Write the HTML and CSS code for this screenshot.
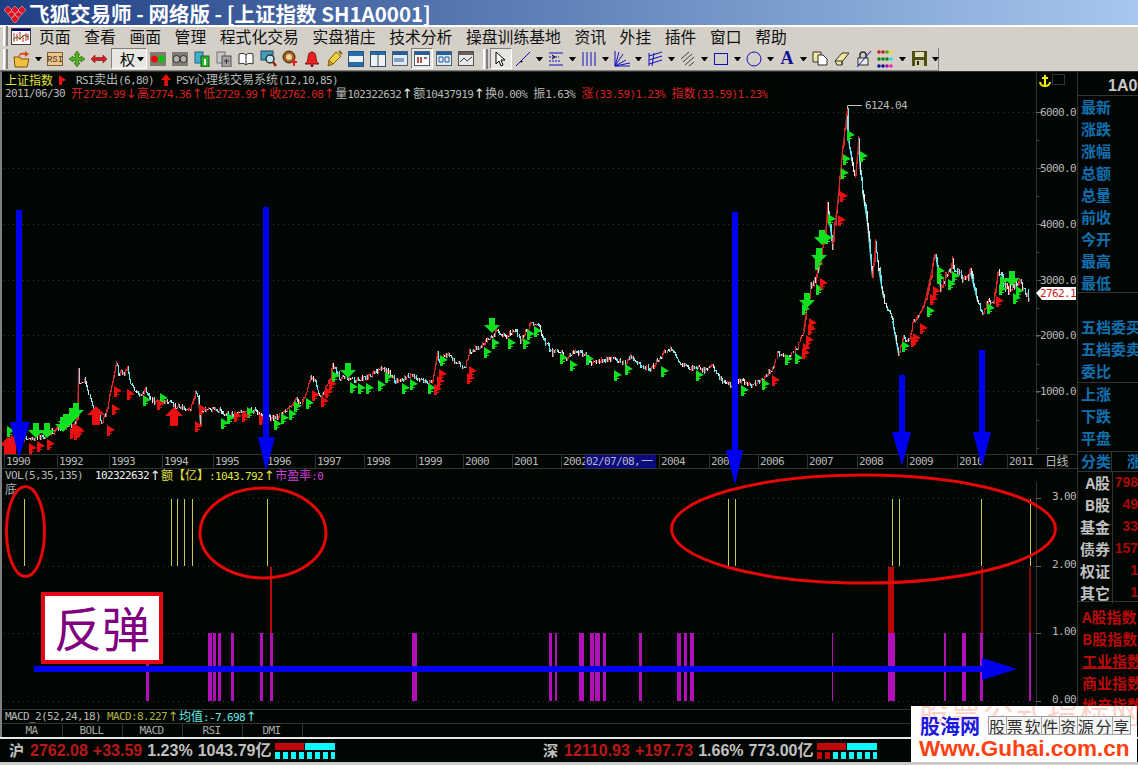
FILE: index.html
```html
<!DOCTYPE html>
<html>
	<head>
		<meta charset="utf-8">
		<title>飞狐交易师</title>
		<link rel="stylesheet" href="styles.css">
	</head>

	<body>
		<div class="app">
			<div class="titlebar">
				<svg class="logo" width="24" height="20" viewBox="0 0 24 20">
					<path d="M5 3l4 4-4 4-4-4z M12 3l4 4-4 4-4-4z M19 3l4 4-4 4-4-4z M8.500 8l3.500 3.500-3.500 3.500-3.500-3.500z M15.500 8l3.500 3.500-3.500 3.500-3.500-3.500z M12 12l4 4-4 4-4-4z" fill="#e01020" stroke="#ffd0c0" stroke-width=".5"/>
				</svg>
				<span>飞狐交易师 - 网络版 - [上证指数 SH1A0001]</span>
			</div>

			<div class="menubar">
				<i class="grip"></i>
				<svg class="menu-icon" width="20" height="17" viewBox="0 0 20 17">
					<rect x=".5" y=".5" width="19" height="16" fill="#fff" stroke="#404040"/>
					<rect x="1" y="1" width="18" height="2" fill="#000080"/>
					<path d="M3 5v9M6 6v7M9 4v8M12 7v7M15 5v8M17 6v6" stroke="#d02020"/>
					<path d="M2 11l4-2 3 2 4-4 5 2" stroke="#108010" fill="none"/>
				</svg>
				<span>页面</span><span>查看</span><span>画面</span><span>管理</span><span>程式化交易</span><span>实盘猎庄</span><span>技术分析</span><span>操盘训练基地</span><span>资讯</span><span>外挂</span><span>插件</span><span>窗口</span><span>帮助</span>
			</div>

			<div class="toolbar">
				<i class="grip"></i>
				<b class="tool"><svg width="18" height="18" viewBox="0 0 18 18"><path d="M1 7h6l1 2h8l-2 8H2z" fill="#f0c040" stroke="#805000"/><path d="M5 7c1-4 4-5 7-4V1l4 3-4 3V5c-3-1-5 0-7 2z" fill="#e04010"/></svg></b><i class="dd"></i>
				<b class="tool"><svg width="16" height="14" viewBox="0 0 16 14"><rect x=".5" y=".5" width="15" height="13" fill="#e8c890" stroke="#806030"/><text x="8" y="10" class="ico-text">RSI</text></svg></b>
				<b class="tool"><svg width="16" height="16" viewBox="0 0 16 16"><path d="M8 0l3 4H9.500v2.500H12V5l4 3-4 3V9.500H9.500V12H11l-3 4-3-4h1.500V9.500H4V11L0 8l4-3v1.500h2.500V4H5z" fill="#50b020" stroke="#206000" stroke-width=".6"/></svg></b>
				<b class="tool"><svg width="16" height="10" viewBox="0 0 16 10"><path d="M0 5l4-4v2.500h8V1l4 4-4 4V6.500H4V9z" fill="#d02020" stroke="#801010" stroke-width=".6"/></svg></b>
				<b class="tool-wide">权<i class="dd"></i></b>
				<b class="tool"><svg width="16" height="14" viewBox="0 0 16 14"><rect width="16" height="14" fill="#807c74"/><circle cx="4.500" cy="7" r="3.500" fill="#e01010"/><circle cx="11.500" cy="7" r="3.500" fill="#10c010"/></svg></b>
				<b class="tool"><svg width="16" height="14" viewBox="0 0 16 14"><rect width="16" height="14" fill="#807c74"/><circle cx="4.500" cy="7" r="3.500" fill="#b0b0b0" stroke="#303030"/><circle cx="11.500" cy="7" r="3.500" fill="#b0b0b0" stroke="#303030"/></svg></b>
				<b class="tool"><svg width="16" height="16" viewBox="0 0 16 16"><rect x="1" y="1" width="8" height="11" fill="#40b0d0" stroke="#206080"/><rect x="7" y="5" width="8" height="11" fill="#30b030" stroke="#106010"/><path d="M11 8v6" stroke="#fff" stroke-width="2"/></svg></b>
				<b class="tool"><svg width="16" height="16" viewBox="0 0 16 16"><rect x="1" y="1" width="8" height="11" fill="#c8c8c8" stroke="#707070"/><rect x="6" y="5" width="9" height="11" fill="#a0a0a0" stroke="#505050"/><path d="M8 10h5M10.500 8v5" stroke="#303030"/></svg></b>
				<b class="tool"><svg width="16" height="16" viewBox="0 0 16 16"><path d="M1 3c3-1 5-1 7 1 2-2 4-2 7-1v10c-3-1-5-1-7 1-2-2-4-2-7-1z M8 4v10" fill="#fff" stroke="#303030"/></svg></b>
				<b class="tool"><svg width="17" height="17" viewBox="0 0 17 17"><rect x="1" y="1" width="12" height="9" fill="#40a0c0" stroke="#204060"/><circle cx="10" cy="9" r="4" fill="#c0e8f0" stroke="#303030" stroke-width="1.500"/><path d="M13 12l3 4" stroke="#a02010" stroke-width="2.500"/></svg></b>
				<b class="tool"><svg width="17" height="17" viewBox="0 0 17 17"><circle cx="7" cy="7" r="6" fill="#a06020" stroke="#402000"/><circle cx="7" cy="7" r="3" fill="#f0d0a0"/><path d="M12 9v7M9 12h6" stroke="#e02020" stroke-width="2"/></svg></b>
				<b class="tool"><svg width="16" height="16" viewBox="0 0 16 16"><path d="M8 1c3 0 4 3 4 6s1 4 3 6H1c2-2 3-3 3-6s1-6 4-6z" fill="#e82020" stroke="#801010"/><circle cx="8" cy="14.500" r="1.500" fill="#801010"/></svg></b>
				<b class="tool"><svg width="17" height="17" viewBox="0 0 17 17"><path d="M3 10l7-8 5 4-8 8z" fill="#f0d040" stroke="#806000"/><path d="M3 10l4 4-5 2z" fill="#d0a020" stroke="#806000"/><path d="M13 1l3 3" stroke="#806000" stroke-width="2"/></svg></b>
				<b class="tool"><svg width="16" height="16" viewBox="0 0 16 16"><rect x=".5" y=".5" width="15" height="15" fill="#f0f0f0" stroke="#305070"/><rect x="1" y="1" width="14" height="4" fill="#2070b0"/><rect x="1" y="11" width="14" height="4" fill="#2070b0"/></svg></b>
				<b class="tool"><svg width="16" height="16" viewBox="0 0 16 16"><rect x=".5" y=".5" width="15" height="15" fill="#f0f0f0" stroke="#305070"/><rect x="1" y="1" width="14" height="3" fill="#2070b0"/><path d="M8 1v14" stroke="#305070"/></svg></b>
				<b class="tool"><svg width="16" height="15" viewBox="0 0 16 15"><rect x=".5" y=".5" width="15" height="14" fill="#e0e8f0" stroke="#506070"/><rect x="1" y="1" width="14" height="3" fill="#2060a0"/><path d="M3 7v4M5 7v4M7 7v4M9 7v4M11 7v4" stroke="#2060a0"/></svg></b>
				<b class="tool pressed"><svg width="16" height="15" viewBox="0 0 16 15"><rect x=".5" y=".5" width="15" height="14" fill="#fff" stroke="#506070"/><rect x="1" y="1" width="14" height="3" fill="#2060a0"/><path d="M4 6v6M7 6v6M10 7h3" stroke="#a02020" stroke-width="1.500"/></svg></b>
				<b class="tool"><svg width="16" height="15" viewBox="0 0 16 15"><rect x=".5" y=".5" width="15" height="14" fill="#e0e8f0" stroke="#506070"/><rect x="1" y="1" width="14" height="3" fill="#2060a0"/><path d="M3 6h4v5H3zM9 6h4v5H9z" fill="none" stroke="#2060a0"/></svg></b>
				<b class="tool"><svg width="16" height="15" viewBox="0 0 16 15"><rect x=".5" y=".5" width="15" height="14" fill="#e8e8e8" stroke="#505050"/><rect x="1" y="1" width="14" height="3" fill="#606060"/><path d="M2 11l4-4 3 3 5-4" stroke="#404040" fill="none"/></svg></b>
				<i class="grip grip-mid"></i>
				<b class="tool pressed"><svg width="14" height="16" viewBox="0 0 14 16"><path d="M2 1v12l3-3 2 5 2-1-2-5h4z" fill="#fff" stroke="#000"/></svg></b>
				<b class="tool"><svg width="16" height="16" viewBox="0 0 16 16"><path d="M1 15L15 1" stroke="#1010c0"/><path d="M6 10l1 1" stroke="#000" stroke-width="2"/></svg></b><i class="dd"></i>
				<b class="tool"><svg width="16" height="16" viewBox="0 0 16 16"><path d="M1 2h14M1 14h14" stroke="#1010c0"/><path d="M1 6h10M1 10h12" stroke="#1010c0" stroke-dasharray="2 1"/><path d="M4 4l3 2-3 2" stroke="#000" fill="none"/></svg></b><i class="dd"></i>
				<b class="tool"><svg width="16" height="16" viewBox="0 0 16 16"><path d="M2 1v14M6 1v14M10 1v14M14 1v14" stroke="#1010c0"/></svg></b><i class="dd"></i>
				<b class="tool"><svg width="17" height="17" viewBox="0 0 17 17"><path d="M1 1v15h15M1 16L5 2M1 16L9 4M1 16l11-6M1 16l15-3" stroke="#1010c0" fill="none"/></svg></b><i class="dd"></i>
				<b class="tool"><svg width="16" height="16" viewBox="0 0 16 16"><path d="M2 2v13M2 5l13-4M2 9l13-4M2 13l13-4M7 2l-2 13" stroke="#1010c0" fill="none"/></svg></b><i class="dd"></i>
				<b class="tool"><svg width="16" height="16" viewBox="0 0 16 16"><path d="M1 8l8-7M3 11l9-8M5 14l9-8M9 15l5-4" stroke="#404040" fill="none"/></svg></b><i class="dd"></i>
				<b class="tool"><svg width="16" height="14" viewBox="0 0 16 14"><rect x="1.500" y="1.500" width="13" height="11" fill="none" stroke="#1010c0"/></svg></b><i class="dd"></i>
				<b class="tool"><svg width="16" height="16" viewBox="0 0 16 16"><circle cx="8" cy="8" r="7" fill="none" stroke="#1010c0"/></svg></b><i class="dd"></i>
				<b class="tool tool-a">A</b><i class="dd"></i>
				<b class="tool"><svg width="16" height="15" viewBox="0 0 16 15"><path d="M1 1h8v10H1z" fill="#f0e8a0" stroke="#303030"/><path d="M6 4h5l4 4v6H6z" fill="#fff" stroke="#303030"/></svg></b>
				<b class="tool"><svg width="16" height="14" viewBox="0 0 16 14"><path d="M1 9l7-8h7l-7 9v3H3z" fill="#f0e8a0" stroke="#303030"/><path d="M1 9h7v4" fill="none" stroke="#303030"/></svg></b>
				<b class="tool"><svg width="16" height="18" viewBox="0 0 16 18"><rect x="2" y="8" width="10" height="7" fill="#e8e8e0" stroke="#303030"/><path d="M4 8V5c0-4 6-4 6 0v3" fill="none" stroke="#303030" stroke-width="1.500"/><path d="M1 17L15 1" stroke="#1010c0"/></svg></b>
				<b class="tool"><svg width="18" height="18" viewBox="0 0 18 18"><g class="dots-r"><circle cx="2" cy="2" r="1.800"/><circle cx="6" cy="2" r="1.800"/></g><circle cx="10" cy="2" r="1.800" fill="#50a010"/><circle cx="14" cy="2" r="1.800" fill="#f0e020"/><circle cx="2" cy="9" r="1.800" fill="#108010"/><circle cx="6" cy="9" r="1.800" fill="#108010"/><circle cx="10" cy="9" r="1.800" fill="#108010"/><circle cx="14" cy="9" r="1.800" fill="#20e0e0"/><circle cx="2" cy="16" r="1.800" fill="#101090"/><circle cx="6" cy="16" r="1.800" fill="#101090"/><circle cx="10" cy="16" r="1.800" fill="#a010a0"/><circle cx="14" cy="16" r="1.800" fill="#f020c0"/></svg></b><i class="dd"></i>
				<b class="tool"><svg width="15" height="15" viewBox="0 0 15 15"><rect width="15" height="15" fill="#505010"/><rect x="3" y="1" width="9" height="5" fill="#e0e0c0"/><rect x="3" y="9" width="9" height="6" fill="#d0d0b0"/><rect x="5" y="10" width="2" height="4" fill="#202020"/></svg></b><i class="dd"></i>
			</div>

			<div class="workspace">
				<div class="charts">
					<div class="price-pane">
						<svg id="priceChart" class="layer" width="1077" height="382" viewBox="0 71 1077 382"></svg>
						<div class="legend">
							<span class="cn yellow">上证指数</span><svg class="flag-ico" width="10" height="12" viewBox="0 0 10 12"><path d="M1 1l7 5-4 2v3H1z" fill="#e81010"/></svg><span class="gray">RSI<span class="cn">卖出</span>(6,80)</span><span class="up-ico"></span><span class="gray">PSY<span class="cn">心理线交易系统</span>(12,10,85)</span>
						</div>
						<div class="legend">
							<span class="gray">2011/06/30 </span><span class="red"><span class="cn">开</span>2729.99</span><span class="arrow red">↓</span><span class="red"><span class="cn">高</span>2774.36</span><span class="arrow red">↑</span><span class="red"><span class="cn">低</span>2729.99</span><span class="arrow red">↑</span><span class="red"><span class="cn">收</span>2762.08</span><span class="arrow red">↑</span><span class="gray"><span class="cn">量</span>102322632</span><span class="arrow white">↑</span><span class="gray"><span class="cn">额</span>10437919</span><span class="arrow white">↑</span><span class="gray"><span class="cn">换</span>0.00% <span class="cn">振</span>1.63% </span><span class="red"><span class="cn">涨</span>(33.59)1.23% <span class="cn">指数</span>(33.59)1.23%</span>
						</div>
						<div class="anchor">
							<svg width="12" height="14" viewBox="0 0 12 14"><path d="M6 1v11M3 4h6M1 8c0 3 3 4 5 4s5-1 5-4" fill="none" stroke="#f0f000" stroke-width="2"/></svg>
							<i class="anchor-box"></i>
						</div>
					</div>
					<svg id="timeAxis" class="time-axis" width="1077" height="14" viewBox="0 453 1077 14"></svg>
					<div class="pane-head legend">
						<span class="gray">VOL(5,35,135) </span><span class="white"> 102322632</span><span class="arrow white">↑</span><span class="yellow"><span class="cn">额【亿】</span>:1043.792</span><span class="arrow yellow">↑</span><span class="magenta"><span class="cn">市盈率</span>:0</span>
					</div>
					<div class="ind-pane">
						<svg id="indChart" class="layer" width="1077" height="227" viewBox="0 481 1077 227"></svg>
						<div class="legend"><span class="cn gray">底</span></div>
					</div>
					<div class="pane-head legend">
						<span class="gray">MACD_2(52,24,18) </span><span class="olive">MACD:8.227</span><span class="arrow olive">↑</span><span class="cyan"><span class="cn">均值</span>:-7.698</span><span class="arrow cyan">↑</span>
					</div>
					<div class="tabs">
						<span>MA</span><span>BOLL</span><span>MACD</span><span>RSI</span><span>DMI</span>
					</div>
				</div>

				<div class="quote">
					<div class="q-title">1A0001</div>
					<div class="q-group q-first">
						<div>最新</div><div>涨跌</div><div>涨幅</div><div>总额</div><div>总量</div><div>前收</div><div>今开</div><div>最高</div><div>最低</div>
					</div>
					<div class="q-group q-second">
						<div>五档委买</div><div>五档委卖</div><div>委比</div>
					</div>
					<div class="q-group q-third">
						<div>上涨</div><div>下跌</div><div>平盘</div>
					</div>
					<div class="q-head"><span>分类</span><span>涨家数</span></div>
					<div class="q-table">
						<div><span>A股</span><em>798</em></div>
						<div><span>B股</span><em>49</em></div>
						<div><span>基金</span><em>33</em></div>
						<div><span>债券</span><em>157</em></div>
						<div><span>权证</span><em>1</em></div>
						<div><span>其它</span><em>1</em></div>
					</div>
					<div class="q-index">
						<div>A股指数</div><div>B股指数</div><div class="under">工业指数</div><div>商业指数</div><div>地产指数</div>
					</div>
				</div>
			</div>

			<div class="statusbar">
				<div class="market market-sh">
					<span class="m-name">沪</span><span class="m-price">2762.08</span><span class="m-price">+33.59</span><span class="m-pct">1.23%</span><span class="m-pct">1043.79亿</span>
					<div class="meter">
						<div class="meter-top"><i class="m-red"></i><i class="m-cyan"></i></div>
						<div class="meter-ticks"><i></i><i></i><i></i><i></i><i></i><i></i><i></i><i></i></div>
					</div>
				</div>
				<div class="market market-sz">
					<span class="m-name">深</span><span class="m-price">12110.93</span><span class="m-price">+197.73</span><span class="m-pct">1.66%</span><span class="m-pct">773.00亿</span>
					<div class="meter">
						<div class="meter-top"><i class="m-red"></i><i class="m-cyan"></i></div>
						<div class="meter-ticks"><i class="tick-red"></i><i class="tick-red"></i><i></i><i></i><i></i><i></i><i></i><i></i></div>
					</div>
				</div>
			</div>

			<!-- hand drawn marks that sit over the chart -->
			<svg class="marks" width="1138" height="765" viewBox="0 0 1138 765">
				<g fill="none" stroke="#e40808" stroke-width="3">
					<ellipse cx="25.500" cy="531.500" rx="19" ry="45"/>
					<ellipse cx="263" cy="533" rx="63" ry="45"/>
					<ellipse cx="863.500" cy="529" rx="192" ry="54"/>
				</g>
				<g fill="#0000f0">
					<path d="M16 210h6v212h8l-11 36-9-36h6z"/>
					<path d="M263 207h6v230h6l-9 34-8-34h5z"/>
					<path d="M732 212h6v238h5l-8 35-9-35h6z"/>
					<path d="M899 375h6v57h6l-9 34-10-34h7z"/>
					<path d="M979 350h6v82h6l-9 35-9-35h6z"/>
					<path d="M34 666h948v-8l35 11-35 11v-8H34z"/>
				</g>
			</svg>
			<div class="rebound">反弹</div>

			<div class="watermark">
				<div class="wm-ghost">股票公式指标网</div>
				<div class="wm-row"><span class="wm-name">股海网</span><span class="wm-slogan">股票软件资源分享</span></div>
				<div class="wm-url">Www.Guhai.com.cn</div>
			</div>
		</div>

		<script src="chart.js"></script>
	</body>

</html>
```
FILE: styles.css
```css
* {
	box-sizing: border-box;
}
html, body {
	margin: 0;
	padding: 0;
	background: #d4d0c8;
	overflow: hidden;
}
.app {
	position: relative;
	width: 1138px;
	height: 765px;
	overflow: hidden;
	font-family: "Noto Sans CJK SC", sans-serif;
}

/* title and bars */
.titlebar {
	display: flex;
	align-items: center;
	height: 25px;
	padding-left: 3px;
	gap: 2px;
	background: linear-gradient(to right, #1f3f85, #a6c8ee);
	color: #fff;
	font-size: 20.500px;
	font-weight: bold;
	white-space: nowrap;
}
.menubar {
	display: flex;
	align-items: center;
	height: 23px;
	border-top: 2px solid #fff;
	padding: 0 0 3px 3px;
	font-size: 15.800px;
	color: #111;
	background: #d4d0c8;
}
.menubar span {
	margin-right: 13.600px;
}
.menu-icon {
	margin: 0 8px 0 3px;
}
.grip {
	display: block;
	flex: none;
	width: 5px;
	height: 20px;
	border-left: 2px solid #fff;
	border-right: 2px solid #808080;
}
.toolbar {
	display: flex;
	align-items: center;
	width: 939px;
	height: 23px;
	padding: 0 0 1px 3px;
	background: #d4d0c8;
	border-right: 1px solid #808080;
	border-bottom: 1px solid #808080;
}
.toolbar > .grip {
	margin-right: 3px;
}
.toolbar > .grip-mid {
	margin-left: 6px;
	margin-right: 2px;
}
.tool {
	display: flex;
	flex: none;
	align-items: center;
	justify-content: center;
	width: 22px;
	height: 21px;
}
.pressed {
	background: #e8e6e0;
	border: 1px solid;
	border-color: #808080 #fff #fff #808080;
}
.tool-wide {
	display: flex;
	flex: none;
	align-items: center;
	justify-content: flex-end;
	width: 36px;
	height: 21px;
	margin-left: 1px;
	font-size: 15px;
	font-weight: normal;
	background: #e8e6e0;
	border: 1px solid;
	border-color: #808080 #fff #fff #808080;
}
.tool-a {
	font: bold 18px "Liberation Serif", serif;
	color: #101090;
}
.dd {
	flex: none;
	display: block;
	width: 7px;
	height: 0;
	margin: 0 2px;
	border-top: 4px solid #000;
	border-left: 3.500px solid transparent;
	border-right: 3.500px solid transparent;
}
.ico-text {
	font: 9px "Liberation Mono", monospace;
	text-anchor: middle;
	fill: #603010;
}
.dots-r {
	fill: #c02020;
}

/* chart area */
.workspace {
	display: flex;
	height: 666px;
	background: #020602;
	border-left: 2px solid #808080;
	border-top: 1px solid #333;
	overflow: hidden;
}
.charts {
	display: flex;
	flex-direction: column;
	flex: none;
	width: 1075px;
	color: #bbb;
	font: 11px/14px "DejaVu Sans Mono", "Noto Sans CJK SC", monospace;
	letter-spacing: -.62px;
}
.chart-text {
	font: 11px "DejaVu Sans Mono", monospace;
	letter-spacing: -.62px;
	fill: #b8b8b8;
}
.chart-text.end {
	text-anchor: end;
}
.chart-cn {
	font: 12px "Noto Sans CJK SC", sans-serif;
	fill: #b8b8b8;
}
.price-pane {
	position: relative;
	height: 382px;
	flex: none;
	padding-left: 3px;
	padding-top: 1px;
}
.ind-pane {
	position: relative;
	height: 227px;
	flex: none;
	padding-left: 3px;
}
.layer {
	position: absolute;
	left: -2px;
	top: 0;
}
.legend {
	position: relative;
	height: 14px;
	white-space: pre;
	display: flex;
	align-items: center;
}
.cn {
	font-size: 12px;
	font-family: "Noto Sans CJK SC", sans-serif;
	letter-spacing: 0;
}
.gray {
	color: #b8b8b8;
}
.white {
	color: #f0f0f0;
}
.red {
	color: #d82020;
}
.yellow {
	color: #e0e040;
}
.olive {
	color: #b0b040;
}
.cyan {
	color: #60e8e8;
}
.magenta {
	color: #d040d8;
}
.arrow {
	display: inline-block;
	width: 12px;
	text-align: center;
	font: 13px/14px "DejaVu Sans", sans-serif;
	letter-spacing: 0;
}
.flag-ico {
	margin: 0 8px 0 5px;
}
.up-ico {
	width: 10px;
	height: 12px;
	margin: 0 5px 0 7px;
	background: #e81010;
	clip-path: polygon(50% 0, 100% 50%, 68% 50%, 68% 100%, 32% 100%, 32% 50%, 0 50%);
}
.anchor {
	position: absolute;
	top: 2px;
	left: 1037px;
	display: flex;
	gap: 1px;
}
.anchor-box {
	display: block;
	width: 13px;
	height: 11px;
	border: 1px solid #333;
}
.time-axis {
	flex: none;
	margin-left: -2px;
}
.pane-head {
	flex: none;
	height: 14px;
	padding-left: 3px;
	border-top: 1px solid #333;
}
.tabs {
	display: flex;
	flex: none;
	height: 15px;
	border-top: 1px solid #333;
	padding-left: 1px;
}
.tabs span {
	width: 60px;
	height: 14px;
	text-align: center;
	color: #aaa;
	border-right: 1px solid #333;
	padding-right: 2px;
}

/* quote panel */
.quote {
	flex: none;
	width: 61px;
	border-left: 1px solid #333;
	overflow: hidden;
	font-size: 15px;
	font-weight: bold;
	line-height: 22px;
	color: #1070b0;
	white-space: nowrap;
}
.q-title {
	height: 24px;
	padding-left: 30px;
	font: bold 16px/28px "Liberation Sans", sans-serif;
	color: #c8c8c8;
	border-bottom: 1px solid #333;
}
.q-group {
	padding-left: 3px;
	border-bottom: 1px solid #333;
}
.q-first {
	height: 197px;
}
.q-second {
	height: 90px;
	padding-top: 23px;
}
.q-third {
	height: 69px;
}
.q-head {
	display: flex;
	height: 20px;
	line-height: 18px;
	border-bottom: 1px solid #333;
}
.q-head span:first-child {
	width: 35px;
	padding-left: 3px;
	border-right: 1px solid #333;
}
.q-head span:last-child {
	padding-left: 15px;
}
.q-table {
	height: 130px;
	border-bottom: 1px solid #333;
	line-height: 21px;
}
.q-table div {
	display: flex;
	height: 22px;
}
.q-table span {
	flex: none;
	width: 35px;
	padding-right: 2px;
	text-align: right;
	color: #c0c0c0;
	border-right: 1px solid #333;
}
.q-table em {
	flex: 1;
	font-style: normal;
	font-family: "Liberation Sans", sans-serif;
	font-size: 14px;
	text-align: right;
	color: #a80808;
}
.q-index {
	padding: 4px 0 0 4px;
	color: #b80808;
}
.under {
	text-decoration: underline;
}

/* status bar */
.statusbar {
	display: flex;
	height: 27px;
	padding-top: 1px;
	border-top: 2px solid #e8e8e8;
	border-bottom: 2px solid #c8c8c8;
	background: #020602;
	font: bold 16px/24px "Liberation Sans", "Noto Sans CJK SC", sans-serif;
	white-space: nowrap;
}
.market {
	display: flex;
	align-items: center;
	gap: 5px;
}
.market-sh {
	width: 543px;
	padding-left: 9px;
}
.m-name {
	color: #c0c0c0;
	font-size: 15px;
	margin-right: 1px;
}
.m-price {
	color: #b81818;
}
.m-pct {
	color: #c0c0c0;
}
.meter {
	width: 60px;
	margin-left: -1px;
}
.meter-top {
	display: flex;
	gap: 1px;
	height: 7px;
	margin-bottom: 2px;
}
.m-red {
	display: block;
	width: 29px;
	background: #c00808;
}
.m-cyan {
	display: block;
	width: 30px;
	background: #10f8f8;
}
.meter-ticks {
	display: flex;
	gap: 3px;
	height: 7px;
}
.meter-ticks i {
	display: block;
	width: 5px;
	background: #10f8f8;
}
.meter-ticks .tick-red {
	background: #c00808;
}

/* things over the chart */
.marks {
	position: absolute;
	left: 0;
	top: 0;
}
.rebound {
	position: absolute;
	left: 41px;
	top: 592px;
	width: 122px;
	height: 72px;
	border: 4px solid #e40814;
	background: #fff;
	color: #800080;
	font-size: 48px;
	line-height: 60px;
	text-align: center;
}
.watermark {
	position: absolute;
	left: 911px;
	top: 706px;
	width: 226px;
	height: 56px;
	overflow: hidden;
	background: #fff;
}
.wm-ghost {
	position: absolute;
	left: 8px;
	top: -12px;
	font-size: 30px;
	line-height: 32px;
	letter-spacing: 2px;
	color: #ffd2c8;
	white-space: nowrap;
}
.wm-row {
	position: relative;
	display: flex;
	align-items: center;
	margin-top: 7px;
	padding-left: 9px;
	gap: 8px;
	height: 24px;
}
.wm-name {
	font-size: 20px;
	font-weight: bold;
	color: #1818e0;
}
.wm-slogan {
	width: 143px;
	height: 19px;
	font-size: 16px;
	line-height: 18px;
	letter-spacing: 1.750px;
	color: #303030;
	border: 1px solid #a0a0a0;
	background: repeating-linear-gradient(to right, #f4f4f4 0 16.750px, #a8a8a8 16.750px 17.750px);
	white-space: nowrap;
	overflow: hidden;
}
.wm-url {
	position: relative;
	padding-left: 8px;
	font: bold 22.500px/24px "Liberation Sans", sans-serif;
	color: #ff4010;
}
```
FILE: chart.js
```js
var NS = "http://www.w3.org/2000/svg";

// close prices as page pixels, read off the weekly chart
var line = [[5,445],[20,440],[35,437],[45,435],[58,428],[70,424],[77,420],[78,368],[78,382],[85,380],[90,400],[95,410],[102,422],[106,410],[111,385],[113,375],[116,360],[118,372],[124,372],[127,368],[130,385],[140,395],[145,390],[155,402],[165,400],[175,405],[190,408],[195,392],[198,395],[200,424],[201,410],[215,408],[230,415],[240,412],[250,408],[262,415],[275,418],[285,410],[295,398],[300,403],[306,390],[310,378],[314,380],[320,398],[330,378],[332,363],[340,378],[347,378],[352,380],[365,378],[380,368],[387,370],[395,380],[405,377],[412,375],[425,380],[432,383],[437,352],[438,360],[448,353],[455,362],[465,367],[468,352],[480,345],[490,337],[497,330],[505,335],[515,330],[520,340],[530,323],[538,325],[545,342],[552,352],[560,350],[565,360],[572,352],[585,353],[590,362],[600,360],[612,358],[625,362],[630,355],[640,365],[650,368],[665,350],[672,348],[680,362],[690,368],[695,365],[705,370],[712,365],[720,378],[730,384],[740,380],[750,385],[760,380],[773,367],[777,353],[787,357],[797,347],[803,330],[807,303],[810,287],[815,277],[818,267],[825,233],[827,207],[832,243],[837,203],[842,150],[847,107],[847,133],[852,163],[855,177],[858,140],[860,173],[862,190],[867,223],[872,277],[875,243],[878,267],[883,297],[892,320],[898,353],[903,337],[908,340],[913,320],[923,307],[935,253],[940,287],[952,263],[963,280],[970,272],[977,300],[982,313],[987,300],[993,303],[998,272],[1008,290],[1018,280],[1030,298]];

var greenFlags = [[850,134],[863,155],[846,158],[844,172],[831,218],[828,237],[818,263],[819,288],[805,308],[788,358],[798,357],[905,345],[930,310],[940,270],[940,277],[955,275],[951,283],[990,307],[1003,280],[1002,288],[1019,290],[1016,297],[309,402],[335,375],[353,386],[361,387],[369,387],[381,384],[388,376],[405,387],[413,383],[431,387],[443,359],[487,351],[495,342],[511,342],[526,342],[530,333],[537,330],[563,357],[573,364],[589,358],[617,374],[628,368],[664,370],[699,374],[744,389],[765,383],[146,399],[163,397],[224,422],[230,417],[250,411],[277,423],[284,417],[292,413],[297,405],[10,430],[20,432]];
var redFlags = [[843,195],[841,219],[823,282],[812,322],[811,328],[809,339],[806,347],[805,352],[923,327],[916,337],[914,340],[936,290],[933,298],[999,300],[315,394],[324,400],[328,391],[332,383],[442,373],[440,380],[437,388],[472,370],[470,377],[775,379],[115,408],[110,429],[117,390],[130,393],[160,403],[198,425],[202,408],[237,415],[245,415],[262,418],[32,447],[40,445],[50,443],[80,430],[75,428],[78,428],[73,432],[77,433]];
var greenArrows = [[822,237],[819,255],[807,300],[1012,278],[348,370],[492,325],[36,430],[47,430],[76,410],[72,415],[66,421],[63,424]];
var redArrows = [[12,444],[8,446],[96,415],[174,416]];

var years = [[4,"1990"],[57,"1992"],[109,"1993"],[162,"1994"],[213,"1995"],[265,"1996"],[315,"1997"],[364,"1998"],[416,"1999"],[463,"2000"],[512,"2001"],[561,"2002"],[659,"2004"],[709,"2005"],[758,"2006"],[807,"2007"],[857,"2008"],[907,"2009"],[957,"2010"],[1007,"2011"]];

var seed = 7;
function rnd() {
	seed = (seed * 16807) % 2147483647;
	return seed / 2147483647;
}

function add(svg, tag, attrs, text) {
	var el = document.createElementNS(NS, tag);
	for (var k in attrs) {
		el.setAttribute(k, attrs[k]);
	}
	if (text) {
		el.textContent = text;
	}
	svg.appendChild(el);
	return el;
}

function lineAt(x) {
	var i = 1;
	while (i < line.length - 1 && line[i][0] < x) {
		i++;
	}
	var a = line[i - 1], b = line[i];
	if (b[0] == a[0]) {
		return b[1];
	}
	return a[1] + (b[1] - a[1]) * (x - a[0]) / (b[0] - a[0]);
}

function grid(svg, ys, right) {
	for (var i = 0; i < ys.length; i++) {
		add(svg, "line", {x1: 3, x2: right, y1: ys[i] + .5, y2: ys[i] + .5, stroke: "#333a33", "stroke-dasharray": "1 4"});
	}
}

function drawCandles(svg) {
	var up = "", down = "", pale = "";
	var i, prev = lineAt(5);
	for (i = 1; i < line.length; i++) {
		var a = line[i - 1], b = line[i];
		if (Math.abs(b[1] - a[1]) > 25) {
			var d = "M" + (a[0] + .5) + " " + a[1] + "L" + (b[0] + .5) + " " + b[1];
			if (b[1] < a[1]) {
				up += d;
			} else {
				down += d;
			}
		}
	}
	for (var x = 6; x < 1030; x++) {
		var base = lineAt(x);
		var y = base + (rnd() - .5) * (base < 300 ? 9 : 5);
		var h = rnd() * (base < 300 ? 4 : 2);
		var s = "M" + (x + .5) + " " + (Math.min(prev, y) - h).toFixed(0) + "V" + (Math.max(prev, y) + h * .6).toFixed(0);
		if (y < prev - .5) {
			up += s;
		} else if (rnd() < .3) {
			pale += s;
		} else {
			down += s;
		}
		prev = y;
	}
	add(svg, "path", {d: down, stroke: "#70e8f0", fill: "none"});
	add(svg, "path", {d: pale, stroke: "#e8e8e8", fill: "none"});
	add(svg, "path", {d: up, stroke: "#d82828", fill: "none"});
}

function flag(x, y) {
	return "M" + (x - 3) + " " + (y - 5) + "l8 5-5 2v1h2v1h-2v2h-3z";
}

function drawMarks(svg) {
	var g = "", r = "", i, p;
	for (i = 0; i < greenFlags.length; i++) {
		g += flag(greenFlags[i][0], greenFlags[i][1]);
	}
	for (i = 0; i < redFlags.length; i++) {
		r += flag(redFlags[i][0], redFlags[i][1]);
	}
	for (i = 0; i < greenArrows.length; i++) {
		p = greenArrows[i];
		g += "M" + (p[0] - 3) + " " + (p[1] - 8) + "h6v7h5l-8 8-8-8h5z";
	}
	for (i = 0; i < redArrows.length; i++) {
		p = redArrows[i];
		r += "M" + p[0] + " " + (p[1] - 10) + "l9 9h-5v10h-8v-10h-5z";
	}
	add(svg, "path", {d: g, fill: "#10e020"});
	add(svg, "path", {d: r, fill: "#e81010"});
}

function axisLabel(svg, text, y) {
	add(svg, "text", {x: 1076, y: y, "class": "chart-text end"}, text);
}

function drawPrice() {
	var svg = document.getElementById("priceChart");
	var ys = [111, 167, 223, 279, 334, 390], i;
	grid(svg, ys, 1035);
	add(svg, "line", {x1: 1036.5, x2: 1036.5, y1: 71, y2: 453, stroke: "#333"});
	drawCandles(svg);
	drawMarks(svg);
	for (i = 0; i < ys.length; i++) {
		add(svg, "line", {x1: 1036, x2: 1041, y1: ys[i] + .5, y2: ys[i] + .5, stroke: "#666"});
		axisLabel(svg, (6 - i) * 1000 + ".0", ys[i] + 4);
	}
	for (i = 0; i < 12; i++) {
		add(svg, "line", {x1: 1036, x2: 1039, y1: 139.500 + i * 28, y2: 139.500 + i * 28, stroke: "#444"});
	}
	add(svg, "path", {d: "M847.500 108V104.500H862", stroke: "#c0c0c0", fill: "none"});
	add(svg, "text", {x: 865, y: 108, "class": "chart-text"}, "6124.04");
	add(svg, "path", {d: "M1036 292l6-6h34v13h-34z", fill: "#fff"});
	add(svg, "text", {x: 1076, y: 296, "class": "chart-text end", style: "fill:#d01818"}, "2762.1");
}

function drawTime() {
	var svg = document.getElementById("timeAxis");
	add(svg, "line", {x1: 3, x2: 1077, y1: 453.500, y2: 453.500, stroke: "#333"});
	for (var i = 0; i < years.length; i++) {
		add(svg, "line", {x1: years[i][0] + .5, x2: years[i][0] + .5, y1: 453, y2: 467, stroke: "#333"});
		add(svg, "text", {x: years[i][0] + 2, y: 464, "class": "chart-text"}, years[i][1]);
	}
	add(svg, "rect", {x: 585, y: 454, width: 71, height: 13, fill: "#0a0a80"});
	add(svg, "text", {x: 586, y: 464, "class": "chart-text"}, "02/07/08,");
	add(svg, "text", {x: 641, y: 465, "class": "chart-cn"}, "一");
	add(svg, "text", {x: 1045, y: 465, "class": "chart-cn"}, "日线");
}

function drawIndicator() {
	var svg = document.getElementById("indChart");
	var ys = [497, 565, 632, 700], labels = ["3.00", "2.00", "1.00", "0.00"], i;
	grid(svg, ys, 1035);
	add(svg, "line", {x1: 1036.5, x2: 1036.5, y1: 481, y2: 708, stroke: "#333"});

	// 底 signal
	var yellow = [24, 171, 177, 184, 192, 267, 728, 735, 892, 899, 981, 1030];
	for (i = 0; i < yellow.length; i++) {
		add(svg, "line", {x1: yellow[i] + .5, x2: yellow[i] + .5, y1: 498, y2: 565, stroke: "#c8c850"});
	}
	// [x, width, colour] for the 2.00 to 1.00 step
	var reds = [[270, 2, "#c00808"], [888, 6, "#b80808"], [981, 2, "#a00808"], [1029, 2, "#880808"]];
	for (i = 0; i < reds.length; i++) {
		add(svg, "rect", {x: reds[i][0], y: 566, width: reds[i][1], height: 66, fill: reds[i][2]});
	}
	// [left, right] for the 反弹 bars
	var bars = [[146,149],[208,212],[213,216],[218,221],[231,234],[260,263],[270,273],[412,417],[549,552],[555,557],[579,584],[590,594],[595,600],[603,606],[639,642],[677,681],[684,687],[690,694],[832,833],[888,895],[944,946],[962,966],[980,983],[1029,1031]];
	for (i = 0; i < bars.length; i++) {
		add(svg, "rect", {x: bars[i][0], y: 632, width: bars[i][1] - bars[i][0], height: 68, fill: "#b010b8"});
	}
	for (i = 0; i < ys.length; i++) {
		add(svg, "line", {x1: 1036, x2: 1041, y1: ys[i] + .5, y2: ys[i] + .5, stroke: "#666"});
		axisLabel(svg, labels[i], ys[i] + 2);
	}
}

drawPrice();
drawTime();
drawIndicator();
```
